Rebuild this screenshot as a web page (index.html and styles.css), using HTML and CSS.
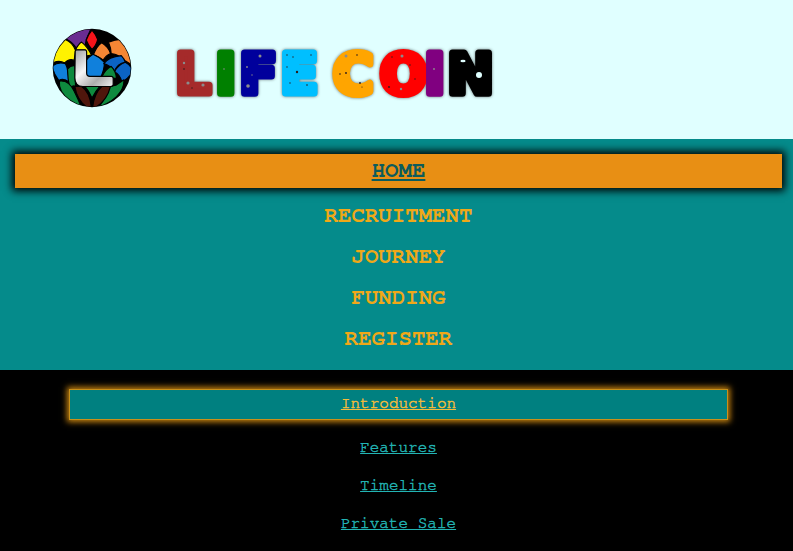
FILE: index.html
```html
<!DOCTYPE html>
<html lang="en">
<head>
<meta charset="utf-8">
<title>Life Coin</title>
<link rel="stylesheet" href="styles.css">
</head>
<body>
<header class="masthead">
  <svg class="logo" viewBox="36 24 238 238" aria-hidden="true">
    <defs>
      <clipPath id="disc"><circle cx="155" cy="143" r="115"/></clipPath>
      <linearGradient id="steel" x1="0" y1="0" x2="1" y2="1">
        <stop offset="0" stop-color="#a0a0a0"/>
        <stop offset=".4" stop-color="#f6f6f6"/>
        <stop offset=".7" stop-color="#adadad"/>
        <stop offset="1" stop-color="#f0f0f0"/>
      </linearGradient>
    </defs>
    <circle cx="155" cy="143" r="117" fill="#000"/>
    <g clip-path="url(#disc)" stroke="#000" stroke-width="3.5" stroke-linejoin="round">
      <path fill="#6a2c91" d="M76 56 Q110 26 152 26 L138 58 L134 80 Q122 64 108 84 Q96 64 76 56Z"/>
      <path fill="#f5141a" d="M155 30 Q142 45 138 60 Q145 78 155 88 Q168 76 172 58 Q166 42 155 30Z"/>
      <path fill="#fff200" d="M34 130 Q44 88 76 58 Q96 66 106 90 L102 120 Q86 114 74 128 Q56 118 34 130Z"/>
      <path fill="#fff200" d="M106 90 Q114 72 124 66 Q142 80 154 106 Q140 104 136 110 L136 90Z"/>
      <path fill="#f58634" d="M158 106 Q170 76 184 68 Q204 80 210 100 Q196 106 188 120 Q176 108 158 106Z"/>
      <path fill="#f58634" d="M204 66 Q224 58 240 58 Q264 90 276 136 Q258 122 244 118 Q236 102 212 100 Q212 84 204 66Z"/>
      <path fill="#1080dc" d="M136 122 Q142 112 158 102 Q178 110 192 126 Q192 150 180 172 L136 172Z"/>
      <path fill="#0b63c4" d="M190 130 Q204 110 242 106 Q252 116 254 126 Q230 130 222 152 Q210 136 190 130Z"/>
      <path fill="#0b63c4" d="M254 126 Q270 134 276 150 Q268 172 244 184 Q238 162 222 154 Q232 134 254 126Z"/>
      <path fill="#1080dc" d="M36 138 Q52 124 76 130 Q86 148 86 184 Q70 172 56 180 Q40 158 36 138Z"/>
      <path fill="#0e8a3e" d="M82 146 Q92 134 104 136 L106 198 Q96 192 90 206 Q82 176 82 146Z"/>
      <path fill="#0e8a3e" d="M184 170 Q196 146 212 138 Q226 152 228 174 L184 172Z"/>
      <path fill="#0e8a3e" d="M58 182 Q86 178 102 212 Q114 236 122 256 Q82 244 64 212 Q56 196 58 182Z"/>
      <path fill="#0e8a3e" d="M250 178 Q252 204 228 228 Q204 250 176 258 Q196 232 208 198 L226 194Z"/>
      <path fill="#0e8a3e" d="M134 198 L178 198 Q166 212 155 232 Q146 212 134 198Z"/>
      <path fill="#4f160c" d="M104 198 L124 198 Q148 214 153 258 L140 260 Q110 238 104 198Z"/>
      <path fill="#4f160c" d="M184 198 L210 198 Q200 240 166 260 L157 258 Q162 218 184 198Z"/>
    </g>
    <path fill="url(#steel)" stroke="#000" stroke-width="3.5" stroke-linejoin="round" d="M105 94 Q105 89 110 89 L134 89 Q139 89 139 95 L139 158 Q139 168 149 168 L212 168 Q218 168 218 174 L218 192 Q218 198 210 198 L128 198 Q104 198 104 172Z"/>
  </svg>
  <svg class="wordmark" viewBox="177 48 320 52" role="img" aria-label="LIFE COIN">
    <text class="wordmark-text" y="92.5"><tspan x="175.5" fill="#a52a2a" stroke="#a52a2a">L</tspan><tspan x="215.5" fill="#008000" stroke="#008000">I</tspan><tspan x="239.5" fill="#00009c" stroke="#00009c">F</tspan><tspan x="280.5" fill="#00bfff" stroke="#00bfff">E</tspan><tspan x="333" fill="#ffa500" stroke="#ffa500">C</tspan><tspan x="380" fill="#ff0000" stroke="#ff0000">O</tspan><tspan x="424.5" fill="#800080" stroke="#800080">I</tspan><tspan x="447.5" fill="#000" stroke="#000">N</tspan></text>
    <g fill="#2b1a1a">
      <circle cx="184" cy="69" r=".8"/><circle cx="192" cy="88" r=".7"/>
      <circle cx="287" cy="55" r=".7"/><circle cx="311" cy="55" r=".7"/><circle cx="293" cy="57" r=".7"/><circle cx="287" cy="67" r=".7"/><circle cx="290" cy="83" r=".7"/><circle cx="307" cy="85" r=".8"/>
      <circle cx="357" cy="55" r=".8"/><circle cx="340" cy="74" r=".8"/><circle cx="346" cy="73" r=".9"/><circle cx="360" cy="83" r=".9"/><circle cx="362" cy="87" r=".6"/>
      <circle cx="392" cy="57" r=".7"/><circle cx="410" cy="65" r=".7"/><circle cx="389" cy="87" r=".9"/><circle cx="415" cy="79" r=".7"/><circle cx="297" cy="72" r="1.2"/>
    </g>
    <g fill="#8c8c8c">
      <circle cx="184" cy="63" r="1.2"/><circle cx="188" cy="83" r="1.6"/><circle cx="203" cy="85" r="1.6"/><circle cx="224" cy="69" r=".8"/>
      <circle cx="260" cy="56" r="1.5"/><circle cx="247" cy="67" r=".9"/><circle cx="248" cy="86" r="1.8"/><circle cx="252" cy="75" r=".7"/>
      <circle cx="346" cy="56" r="1.5"/><circle cx="402" cy="56" r="1.5"/><circle cx="401" cy="89" r="1.2"/><circle cx="434" cy="69" r=".9"/>
    </g>
    <g fill="#e0ffff">
      <ellipse cx="463" cy="61" rx="2.6" ry="1.2"/><circle cx="479" cy="75" r="3"/>
    </g>
  </svg>
</header>

<nav class="primary">
  <a class="primary-link is-active" href="#home">HOME</a>
  <a class="primary-link" href="#recruitment">RECRUITMENT</a>
  <a class="primary-link" href="#journey">JOURNEY</a>
  <a class="primary-link" href="#funding">FUNDING</a>
  <a class="primary-link" href="#register">REGISTER</a>
</nav>

<nav class="secondary">
  <a class="secondary-link is-active" href="#introduction">Introduction</a>
  <a class="secondary-link" href="#features">Features</a>
  <a class="secondary-link" href="#timeline">Timeline</a>
  <a class="secondary-link" href="#sale">Private Sale</a>
</nav>
</body>
</html>
```
FILE: styles.css
```css
html, body {
  margin: 0;
  height: 551px;
  overflow: hidden;
  background: #000;
}

body {
  font-family: FreeMono, "Liberation Mono", monospace;
}

.masthead {
  height: 139px;
  box-sizing: border-box;
  padding: 28px 0 0 52px;
  display: flex;
  align-items: flex-start;
  background: #e0ffff;
}

.logo {
  width: 80px;
  height: 80px;
  flex: none;
}

.wordmark {
  margin: 20px 0 0 45px;
  width: 320px;
  height: 52px;
  overflow: visible;
  filter: drop-shadow(0 0 1.5px rgba(0, 0, 0, .55));
}

.wordmark-text {
  font-family: "DejaVu Sans", sans-serif;
  font-size: 55px;
  font-weight: 700;
  stroke-width: 7px;
  stroke-linejoin: round;
}

.primary {
  height: 231px;
  box-sizing: border-box;
  padding-top: 15px;
  display: flex;
  flex-direction: column;
  background: #058b8b;
}

.primary-link {
  height: 41px;
  line-height: 39px;
  margin: 0 11px 0 15px;
  text-align: center;
  font-size: 22.4px;
  font-weight: 700;
  color: #f0a818;
  text-decoration: none;
}

.primary-link.is-active {
  height: 34px;
  line-height: 32px;
  margin-bottom: 8px;
  background: #e88f14;
  color: #0c5c5c;
  text-decoration: underline;
  box-shadow: 0 0 8px 3px #000;
}

.secondary {
  padding-top: 20px;
  display: flex;
  flex-direction: column;
  background: #000;
}

.secondary-link {
  height: 38px;
  line-height: 36px;
  margin: 0 66px 0 70px;
  text-align: center;
  font-size: 16px;
  color: #22b4b4;
  text-decoration: underline;
  -webkit-text-stroke: .45px #22b4b4;
}

.secondary-link.is-active {
  height: 29px;
  line-height: 27px;
  margin-bottom: 10px;
  background: #008080;
  color: #f5bc3a;
  -webkit-text-stroke: .45px #f5bc3a;
  box-shadow: 0 0 0 1px #c8901a, 0 0 6px 3px #c98510;
}
```
